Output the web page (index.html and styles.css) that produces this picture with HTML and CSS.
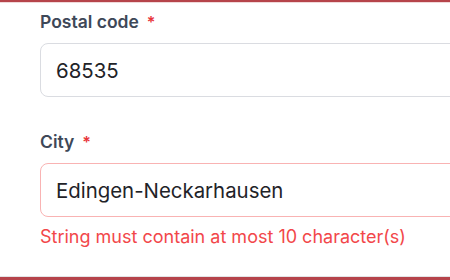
FILE: index.html
```html
<!DOCTYPE html>
<html lang="en">
<head>
<meta charset="utf-8">
<link rel="stylesheet" href="styles.css">
</head>
<body>
<div class="frame">
  <form class="form">
    <div class="field">
      <label class="label" for="zip">Postal code<span class="req">*</span></label>
      <input class="input" id="zip" type="text" value="68535">
    </div>
    <div class="field">
      <label class="label" for="city">City<span class="req">*</span></label>
      <input class="input input-error" id="city" type="text" value="Edingen-Neckarhausen">
      <p class="error">String must contain at most 10 character(s)</p>
    </div>
  </form>
</div>
</body>
</html>
```
FILE: styles.css
```css
html, body {
  margin: 0;
  padding: 0;
  background: #ffffff;
}
.frame {
  box-sizing: border-box;
  width: 450px;
  height: 280px;
  border-top: 2px solid #b6444b;
  border-bottom: 3px solid #b6444b;
  box-shadow: inset 0 1px 0 #f1d9da, inset 0 -1px 0 #e4e4e6;
  overflow: hidden;
  font-family: Inter, "Liberation Sans", sans-serif;
}
.form {
  display: flex;
  flex-direction: column;
  gap: 33px;
  padding: 8px 0 0 40px;
}
.field {
  display: flex;
  flex-direction: column;
}
.label {
  font-size: 17.5px;
  line-height: 24px;
  font-weight: 600;
  color: #3e4858;
  margin-bottom: 9px;
}
.req {
  color: #e8353a;
  margin-left: 8px;
  font-size: 16px;
}
.input {
  box-sizing: border-box;
  width: 460px;
  height: 54px;
  border: 1px solid #dadce1;
  border-radius: 8px;
  padding: 0 15px;
  font-family: Inter, "Liberation Sans", sans-serif;
  font-size: 20.4px;
  color: #1f2328;
  background: #ffffff;
  outline: none;
}
.input-error {
  border-color: #f9b3b3;
}
.error {
  margin: 8px 0 0;
  font-size: 18px;
  line-height: 24px;
  color: #f2474a;
}
```
